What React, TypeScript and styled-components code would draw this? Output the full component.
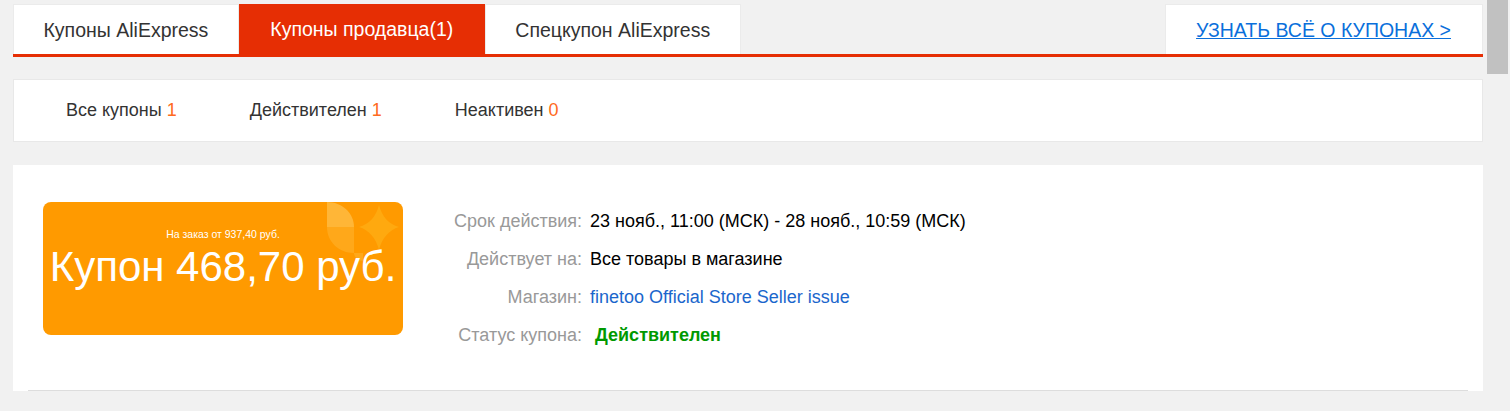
import React from 'react';
import styled, { createGlobalStyle } from 'styled-components';

const GlobalStyle = createGlobalStyle`
  html, body {
    margin: 0;
    padding: 0;
    height: 411px;
    overflow: hidden;
    background: #f1f1f1;
    font-family: "Liberation Sans", Arial, sans-serif;
  }
`;

const Page = styled.div`
  width: 1470px;
  margin-left: 13px;
  padding-top: 4px;
`;

const ScrollThumb = styled.div`
  position: fixed;
  top: 0;
  left: 1487px;
  width: 21px;
  height: 74px;
  background: #c1c1c1;
`;

const TabBar = styled.div`
  display: flex;
  height: 50px;
  border-bottom: 3px solid #e62e04;
`;

const Tab = styled.div<{ $active?: boolean }>`
  display: flex;
  align-items: center;
  padding: 1px ${props => (props.$active ? '31.5px' : '29.5px')} 0;
  font-size: 19.5px;
  color: ${props => (props.$active ? '#fff' : '#333')};
  background: ${props => (props.$active ? '#e62e04' : '#fff')};
  border: ${props => (props.$active ? '0' : '1px solid #ebebeb')};
  border-bottom: 0;
`;

const LearnBox = styled.div`
  display: flex;
  align-items: center;
  margin-left: auto;
  padding: 1px 31px 0 30px;
  background: #fff;
  border: 1px solid #ebebeb;
  border-bottom: 0;
`;

const LearnLink = styled.a`
  font-size: 19.5px;
  color: #0a6fdb;
  text-decoration: underline;
`;

const FilterBar = styled.div`
  display: flex;
  align-items: center;
  gap: 73px;
  height: 63px;
  box-sizing: border-box;
  margin-top: 22px;
  padding-left: 52px;
  background: #fff;
  border: 1px solid #e8e8e8;
  font-size: 18px;
  color: #333;
`;

const Count = styled.span`
  color: #ff6a21;
`;

const Card = styled.div`
  margin-top: 23px;
  padding: 0 15px;
  background: #fff;
`;

const CouponRow = styled.div`
  display: flex;
  height: 226px;
  box-sizing: border-box;
  padding: 37px 0 0 15px;
  border-bottom: 1px solid #ddd;
`;

const CouponTicket = styled.div`
  position: relative;
  flex: none;
  width: 360px;
  height: 133px;
  box-sizing: border-box;
  padding-top: 26px;
  border-radius: 8px;
  background: #ff9a00;
  color: #fff;
  text-align: center;
  overflow: hidden;
`;

const TicketDecor = styled.svg`
  position: absolute;
  top: 0;
  right: 0;
`;

const MinOrder = styled.div`
  position: relative;
  font-size: 10.5px;
  line-height: 12px;
`;

const Amount = styled.div`
  position: relative;
  margin-top: 2px;
  font-size: 42px;
  line-height: 50px;
  white-space: nowrap;
`;

const InfoList = styled.div`
  display: grid;
  grid-template-columns: 128px auto;
  grid-auto-rows: 38px;
  column-gap: 8px;
  justify-content: start;
  align-items: center;
  margin-left: 51px;
  font-size: 18px;
`;

const InfoLabel = styled.div`
  text-align: right;
  white-space: nowrap;
  color: #999;
`;

const InfoValue = styled.div`
  color: #000;
`;

const StoreLink = styled.a`
  color: #1a66cc;
`;

const StatusValue = styled.div`
  padding-left: 5px;
  font-weight: 700;
  color: #009900;
`;

const App: React.FC = () => (
  <>
    <GlobalStyle />
    <Page>
      <TabBar>
        <Tab>Купоны AliExpress</Tab>
        <Tab $active>Купоны продавца(1)</Tab>
        <Tab>Спецкупон AliExpress</Tab>
        <LearnBox>
          <LearnLink href="#">УЗНАТЬ ВСЁ О КУПОНАХ &gt;</LearnLink>
        </LearnBox>
      </TabBar>

      <FilterBar>
        <span>Все купоны <Count>1</Count></span>
        <span>Действителен <Count>1</Count></span>
        <span>Неактивен <Count>0</Count></span>
      </FilterBar>

      <Card>
        <CouponRow>
          <CouponTicket>
            <TicketDecor width="76" height="60" viewBox="0 0 76 60">
              <path d="M0 0C15 0 27 11 27 25H0Z" fill="#ffb637" />
              <path d="M0 25H27V51C12 51 0 40 0 25Z" fill="#ffa81a" />
              <path d="M27 51h9v8C31 59 27 55 27 51Z" fill="#ffa81a" />
              <path d="M52 3C55 15 62 22 72 25C62 28 55 36 52 48C49 36 42 28 32 25C42 22 49 15 52 3Z" fill="#ffa90f" />
            </TicketDecor>
            <MinOrder>На заказ от 937,40 руб.</MinOrder>
            <Amount>Купон 468,70 руб.</Amount>
          </CouponTicket>

          <InfoList>
            <InfoLabel>Срок действия:</InfoLabel>
            <InfoValue>23 нояб., 11:00 (МСК) - 28 нояб., 10:59 (МСК)</InfoValue>
            <InfoLabel>Действует на:</InfoLabel>
            <InfoValue>Все товары в магазине</InfoValue>
            <InfoLabel>Магазин:</InfoLabel>
            <InfoValue><StoreLink>finetoo Official Store Seller issue</StoreLink></InfoValue>
            <InfoLabel>Статус купона:</InfoLabel>
            <StatusValue>Действителен</StatusValue>
          </InfoList>
        </CouponRow>
      </Card>
    </Page>
    <ScrollThumb />
  </>
);

export default App;
